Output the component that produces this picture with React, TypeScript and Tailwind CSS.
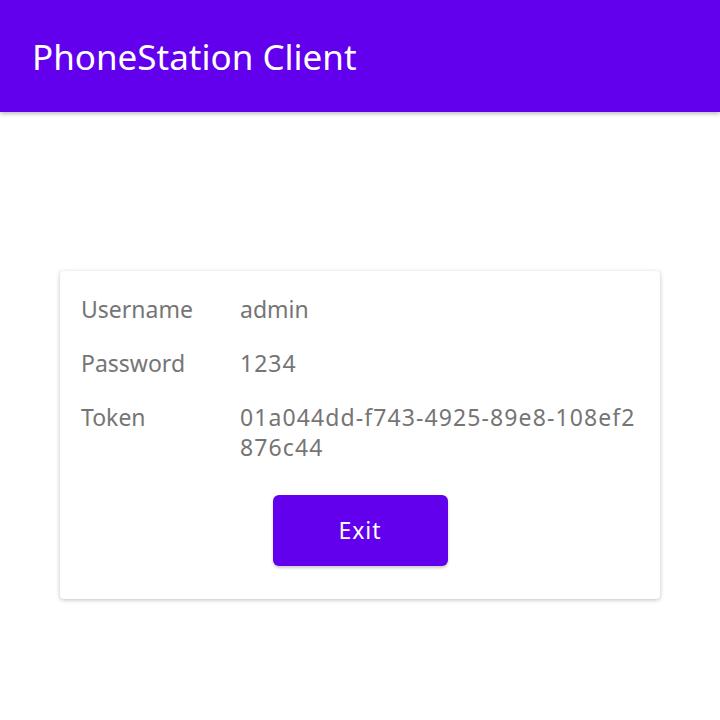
export default function App() {
  const font = { fontFamily: '"Noto Sans", "Open Sans", sans-serif' };
  return (
    <div className="w-[720px] h-[720px] bg-white flex flex-col" style={font}>
      <div className="h-[112px] bg-[#6200ee] flex items-center px-[32px] shadow-[0_2px_4px_rgba(0,0,0,0.25)] z-10">
        <span className="text-white text-[35px] leading-none">PhoneStation Client</span>
      </div>
      <div className="flex justify-center pt-[159px]">
        <div className="w-[600px] bg-white rounded-[4px] shadow-[0_1px_4px_rgba(0,0,0,0.25)] px-[21px] pt-[23px] pb-[33px] flex flex-col">
          <div className="grid grid-cols-[159px_1fr] gap-y-[24px] text-[23px] leading-[30px] text-[#757575]">
            <div>Username</div>
            <div>admin</div>
            <div>Password</div>
            <div className="tracking-[1px]">1234</div>
            <div>Token</div>
            <div className="tracking-[1.1px]">
              01a044dd-f743-4925-89e8-108ef2
              <br />
              876c44
            </div>
          </div>
          <div className="flex justify-center mt-[33px]">
            <button className="w-[175px] h-[71px] bg-[#6200ee] rounded-[6px] text-white text-[23px] tracking-[1px] shadow-[0_2px_3px_rgba(0,0,0,0.2)]">
              Exit
            </button>
          </div>
        </div>
      </div>
    </div>
  );
}
